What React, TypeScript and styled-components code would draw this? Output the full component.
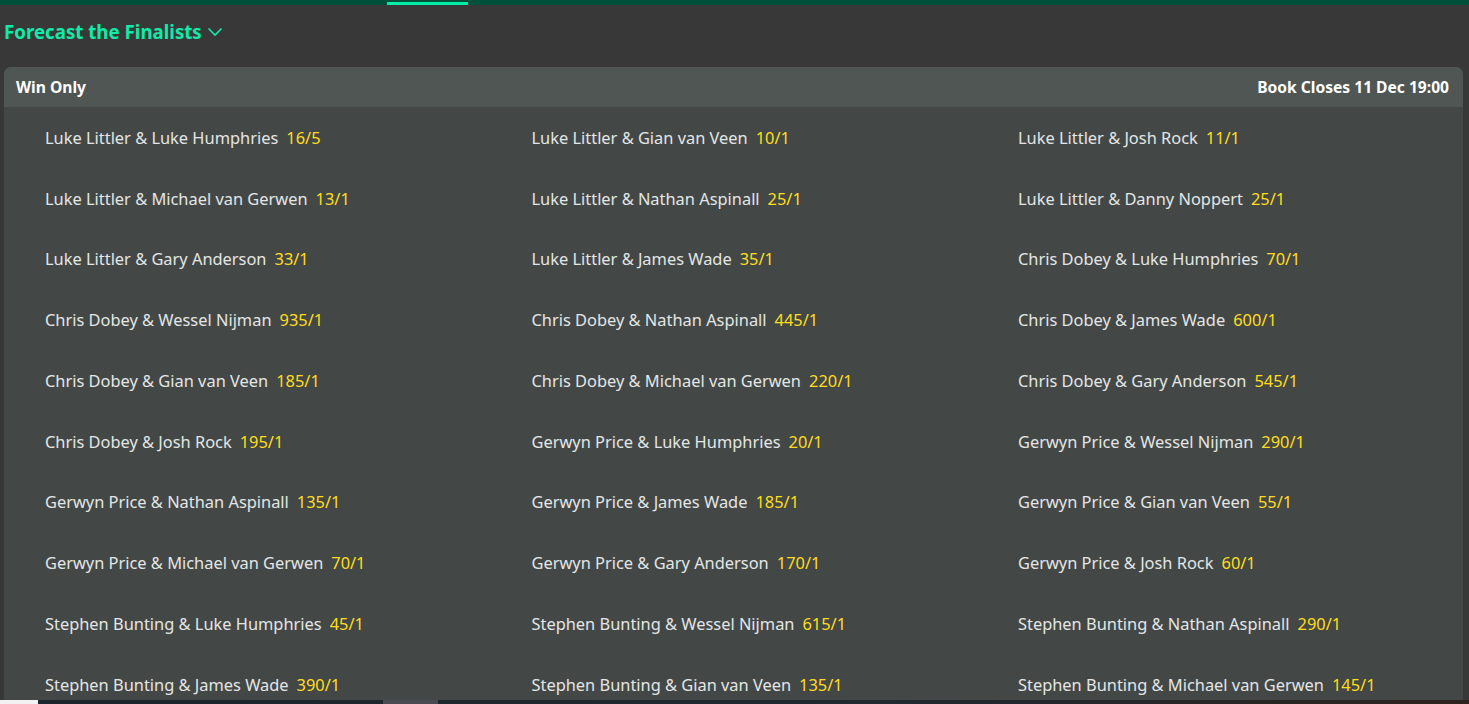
import React from "react";
import styled, { createGlobalStyle } from "styled-components";

const Global = createGlobalStyle`
  html, body { margin: 0; padding: 0; background: #383838; overflow: hidden; }
  body { font-family: "Segoe UI", "Open Sans", "Noto Sans", sans-serif; }
  #root { height: 704px; }
`;

const Page = styled.div`
  width: 1469px;
  height: 704px;
  display: flex;
  flex-direction: column;
  background: #383838;
  position: relative;
  overflow: hidden;
`;

const TopBar = styled.div`
  height: 5px;
  background: #00503c;
  position: relative;
  flex: none;
`;

const ActiveTab = styled.div`
  position: absolute;
  left: 387px;
  top: 2px;
  width: 81px;
  height: 3px;
  background: #00f0a8;
`;

const TitleRow = styled.div`
  display: flex;
  align-items: center;
  gap: 5px;
  height: 52px;
  padding: 0 0 0 4px;
  box-sizing: border-box;
  color: #10eba9;
  font-family: "Noto Sans", sans-serif;
  font-weight: 700;
  font-size: 18.7px;
  flex: none;
`;

const Panel = styled.div`
  margin: 10px 6px 0 4px;
  border-radius: 7px 7px 0 0;
  background: #434847;
  overflow: hidden;
  flex: 1;
  display: flex;
  flex-direction: column;
`;

const PanelHeader = styled.div`
  height: 40px;
  background: #4f5653;
  display: flex;
  align-items: center;
  justify-content: space-between;
  padding: 0 14px 0 12px;
  color: #ffffff;
  font-family: "Noto Sans", sans-serif;
  font-weight: 700;
  font-size: 15.6px;
  flex: none;
`;

const Grid = styled.div`
  display: grid;
  grid-template-columns: repeat(3, 486.5px);
  grid-auto-rows: 60.78px;
`;

const Cell = styled.div`
  display: flex;
  align-items: center;
  padding-left: 41px;
  font-family: "Noto Sans", sans-serif;
  font-size: 16.4px;
  color: #e4e6e5;
  white-space: nowrap;
`;

const Odds = styled.span`
  color: #ffdd1a;
  margin-left: 8px;
`;

const TaskStrip = styled.div`
  position: absolute;
  left: 0;
  right: 0;
  bottom: 0;
  height: 4px;
  display: flex;
  background: linear-gradient(90deg, #1c252b 0%, #202a30 60%, #2e2320 100%);
`;

const StripPart = styled.div<{ $w: number; $c: string }>`
  width: ${(p) => p.$w}px;
  background: ${(p) => p.$c};
  flex: none;
`;

const data: [string, string][] = [
  ["Luke Littler & Luke Humphries", "16/5"],
  ["Luke Littler & Gian van Veen", "10/1"],
  ["Luke Littler & Josh Rock", "11/1"],
  ["Luke Littler & Michael van Gerwen", "13/1"],
  ["Luke Littler & Nathan Aspinall", "25/1"],
  ["Luke Littler & Danny Noppert", "25/1"],
  ["Luke Littler & Gary Anderson", "33/1"],
  ["Luke Littler & James Wade", "35/1"],
  ["Chris Dobey & Luke Humphries", "70/1"],
  ["Chris Dobey & Wessel Nijman", "935/1"],
  ["Chris Dobey & Nathan Aspinall", "445/1"],
  ["Chris Dobey & James Wade", "600/1"],
  ["Chris Dobey & Gian van Veen", "185/1"],
  ["Chris Dobey & Michael van Gerwen", "220/1"],
  ["Chris Dobey & Gary Anderson", "545/1"],
  ["Chris Dobey & Josh Rock", "195/1"],
  ["Gerwyn Price & Luke Humphries", "20/1"],
  ["Gerwyn Price & Wessel Nijman", "290/1"],
  ["Gerwyn Price & Nathan Aspinall", "135/1"],
  ["Gerwyn Price & James Wade", "185/1"],
  ["Gerwyn Price & Gian van Veen", "55/1"],
  ["Gerwyn Price & Michael van Gerwen", "70/1"],
  ["Gerwyn Price & Gary Anderson", "170/1"],
  ["Gerwyn Price & Josh Rock", "60/1"],
  ["Stephen Bunting & Luke Humphries", "45/1"],
  ["Stephen Bunting & Wessel Nijman", "615/1"],
  ["Stephen Bunting & Nathan Aspinall", "290/1"],
  ["Stephen Bunting & James Wade", "390/1"],
  ["Stephen Bunting & Gian van Veen", "135/1"],
  ["Stephen Bunting & Michael van Gerwen", "145/1"],
];

const Chevron = () => (
  <svg width="16" height="10" viewBox="0 0 16 10" fill="none" style={{ marginTop: 2 }}>
    <path d="M1.5 1.5 L8 8 L14.5 1.5" stroke="#10eba9" strokeWidth="1.6" />
  </svg>
);

export default function App() {
  return (
    <Page>
      <Global />
      <TopBar>
        <ActiveTab />
      </TopBar>
      <TitleRow>
        Forecast the Finalists
        <Chevron />
      </TitleRow>
      <Panel>
        <PanelHeader>
          <span>Win Only</span>
          <span>Book Closes 11 Dec 19:00</span>
        </PanelHeader>
        <Grid>
          {data.map(([n, o]) => (
            <Cell key={n}>
              {n}
              <Odds>{o}</Odds>
            </Cell>
          ))}
        </Grid>
      </Panel>
      <TaskStrip>
        <StripPart $w={38} $c="#f2f2f2" />
        <StripPart $w={345} $c="transparent" />
        <StripPart $w={55} $c="#4a4a52" />
      </TaskStrip>
    </Page>
  );
}
